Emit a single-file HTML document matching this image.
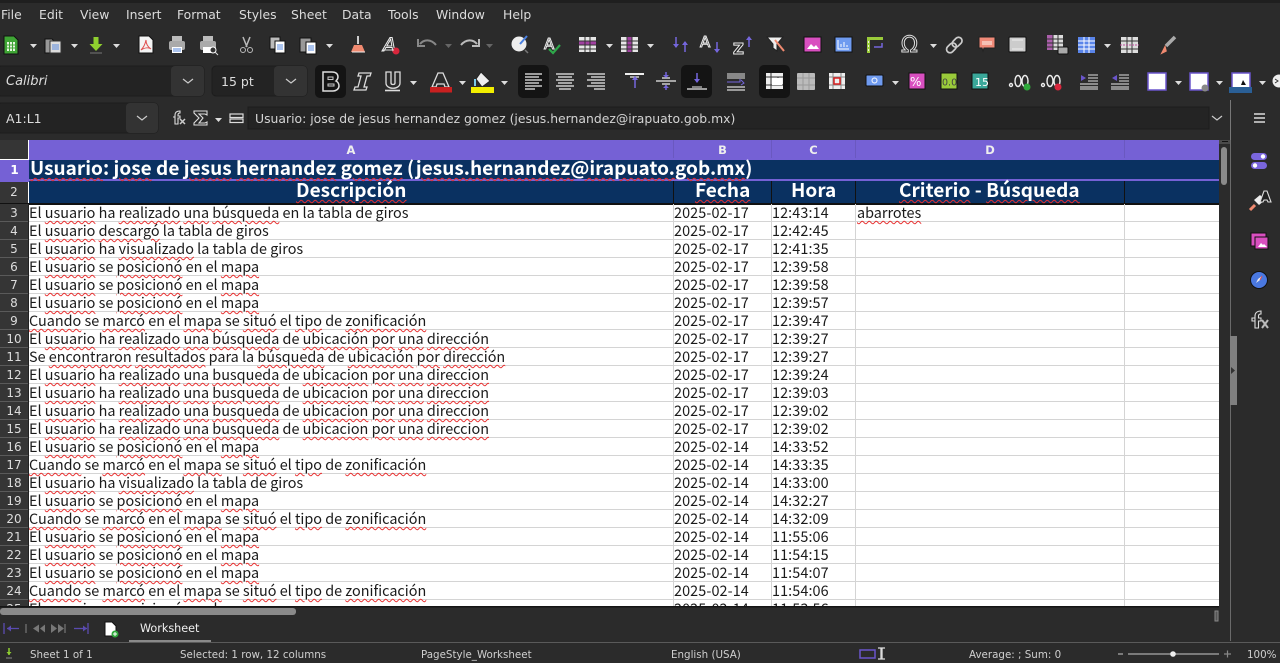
<!DOCTYPE html>
<html><head><meta charset="utf-8"><style>
html,body{margin:0;padding:0;background:#2b2b2b;width:1280px;height:663px;overflow:hidden}
#g{position:absolute;left:0;top:0;width:1280px;height:663px;overflow:hidden}
.ui{position:absolute;z-index:3;font-family:"DejaVu Sans","Liberation Sans",sans-serif;color:#d8d8d8;white-space:nowrap}
.menu{top:7px;font-size:12.4px;line-height:16px;color:#dcdcdc}
.st{top:648px;font-size:10.3px;line-height:14px;color:#cfcfcf}
#sheet{position:absolute;left:0;top:140px;width:1219px;height:466px;overflow:hidden;background:#fff}
.t{position:absolute;margin-top:1px;white-space:nowrap;font-family:"Noto Sans CJK JP","Liberation Sans",sans-serif;font-size:14.4px;line-height:18px;color:#1a1a1a}
.t[style*="left:674"],.t[style*="left:772"]{letter-spacing:.1px}
.t u{text-decoration:underline wavy #e83030 1px;text-underline-offset:1.5px}
.rn{position:absolute;left:0;width:28px;background:#353535;color:#ddd;font:12px/18px "DejaVu Sans",sans-serif;text-align:center;height:17px;border-bottom:1px solid #5a5a5a}
.hl{position:absolute;height:1px;left:29px;width:1190px;background:#d4d4d4}
.vl{position:absolute;width:1px;top:64px;height:402px;background:#d4d4d4}
.ch{position:absolute;top:0;height:18px;background:#7561d5;color:#eee;font:bold 11.5px/20px "DejaVu Sans",sans-serif;text-align:center;border-right:1px solid #6a58c0}
.b{position:absolute;color:#fff;font-family:"Noto Sans CJK JP","Liberation Sans",sans-serif;font-weight:700;white-space:nowrap;font-size:19px;line-height:24px;letter-spacing:.03px}
.b u{text-decoration:underline wavy #e83030 1px;text-underline-offset:1.5px}
</style></head><body><div id="g">

<div style="position:absolute;left:0;top:0;width:1280px;height:3px;background:#1f1f1f"></div>
<div class="ui menu" style="left:1px">File</div><div class="ui menu" style="left:39px">Edit</div><div class="ui menu" style="left:80px">View</div><div class="ui menu" style="left:126px">Insert</div><div class="ui menu" style="left:177px">Format</div><div class="ui menu" style="left:239px">Styles</div><div class="ui menu" style="left:291px">Sheet</div><div class="ui menu" style="left:342px">Data</div><div class="ui menu" style="left:388px">Tools</div><div class="ui menu" style="left:436px">Window</div><div class="ui menu" style="left:503px">Help</div>

<div class="ui" style="left:6px;top:74px;font-size:13px;line-height:16px;font-style:italic;color:#ddd">Calibri</div>
<div class="ui" style="left:221px;top:74px;font-size:12.5px;line-height:16px;color:#ddd">15 pt</div>
<div class="ui" style="left:6px;top:111px;font-size:12.5px;line-height:16px;color:#ddd">A1:L1</div>
<div class="ui" style="left:255px;top:111px;font-size:12.4px;line-height:16px;color:#d4d4d4">Usuario: jose de jesus hernandez gomez (jesus.hernandez@irapuato.gob.mx)</div>

<svg style="position:absolute;left:0;top:0" width="1280" height="140" viewBox="0 0 1280 140" fill="none">
<rect x="-3" y="66" width="207" height="30" rx="4" fill="#232323" stroke="#1c1c1c"/><rect x="171" y="66" width="33" height="30" rx="4" fill="#333"/>
<rect x="212" y="66" width="95" height="30" rx="4" fill="#232323" stroke="#1c1c1c"/><rect x="274" y="66" width="33" height="30" rx="4" fill="#333"/>
<rect x="-3" y="103" width="161" height="30" rx="4" fill="#232323" stroke="#1c1c1c"/><rect x="126" y="103" width="32" height="30" rx="4" fill="#333"/>
<rect x="248" y="107" width="961" height="22" fill="#242424" stroke="#1c1c1c"/>
<g stroke="#ccc" stroke-width="1.2"><path d="M183 79l5 4 5-4M286 79l5 4 5-4M137 116l5 4 5-4M1212 116l5 4 5-4"/></g>
<g fill="#141414"><rect x="315" y="65" width="31" height="33" rx="5"/><rect x="518" y="65" width="31" height="33" rx="5"/><rect x="681" y="65" width="31" height="33" rx="5"/><rect x="759" y="65" width="31" height="33" rx="5"/></g>
<g fill="#ddd"><path d="M30 44h7l-3.500 4zM71 44h7l-3.500 4zM113 44h7l-3.500 4zM326 44h7l-3.500 4zM606 44h7l-3.500 4zM647 44h7l-3.500 4zM930 44h7l-3.500 4zM1104 44h7l-3.500 4zM410 81h7l-3.500 4zM459 81h7l-3.500 4zM501 81h7l-3.500 4zM892 81h7l-3.500 4zM1175 81h7l-3.500 4zM1216 81h7l-3.500 4zM1259 81h7l-3.500 4zM215 118h7l-3.500 4z"/><path fill="#666" d="M445 44h7l-3.500 4zM486 44h7l-3.500 4z"/></g>
<!-- row 1 -->
<path d="M4 36h10l4 4v14H4z" fill="#3fa535" stroke="#111"/><rect x="7" y="42" width="8" height="9" fill="#e8f5e0"/><path d="M9.500 42v9M12.500 42v9M7 45h8M7 48h8" stroke="#3fa535"/>
<path d="M45 39h7l2 2h7v12H45z" fill="#999" stroke="#111"/><rect x="50" y="41" width="11" height="12" fill="#ddd" stroke="#333"/><path d="M52 45h7M52 47h7M52 49h7" stroke="#5a8be0"/>
<path d="M93.500 37h5v7h4l-6.500 7-6.500-7h4z" fill="#8fcf2f"/><path d="M90 53h12" stroke="#777"/>
<path d="M139 36h10l4 4v13h-14z" fill="#f4f4f4" stroke="#111"/><path d="M146 40c-1 5-3 8-5 10 3-2 7-3 10-1-3-2-5-5-5-9z" stroke="#e05050"/>
<path d="M172 36h10v5h-10z" fill="#bbb"/><rect x="169" y="41" width="16" height="9" rx="2" fill="#aaa"/><rect x="172" y="47" width="10" height="6" fill="#fff"/><path d="M173 49h8M173 51h8" stroke="#5a8be0"/>
<path d="M203 36h10v5h-10z" fill="#bbb"/><rect x="200" y="41" width="16" height="9" rx="2" fill="#aaa"/><rect x="203" y="47" width="8" height="6" fill="#fff"/><circle cx="213" cy="50" r="3" fill="#333" stroke="#fff"/><path d="M215 52l3 3" stroke="#ddd"/>
<path d="M243 37l4 10M250 37l-4 10" stroke="#bbb" stroke-width="1.500"/><circle cx="243" cy="50" r="2.500" stroke="#bbb"/><circle cx="250" cy="50" r="2.500" stroke="#bbb"/>
<rect x="270" y="37" width="10" height="12" fill="#bbb" stroke="#111"/><rect x="275" y="41" width="10" height="12" fill="#fff" stroke="#111"/><path d="M277 45h6M277 47h6M277 49h6" stroke="#5a8be0"/>
<rect x="300" y="38" width="11" height="14" fill="#999" stroke="#111"/><rect x="306" y="42" width="10" height="12" fill="#fff" stroke="#111"/><path d="M308 46h6M308 48h6M308 50h6" stroke="#5a8be0"/>
<path d="M358 36v8" stroke="#ccc" stroke-width="2"/><path d="M354 45h8l3 7h-14z" fill="#f08a70"/><path d="M352 52h13" stroke="#eee"/>
<text x="383" y="51" font-family="DejaVu Sans" font-size="19" font-style="italic" stroke="#eee" stroke-width="1" fill="#222">A</text><circle cx="396" cy="51" r="3.500" fill="#d8263c"/><path d="M382 50h12" stroke="#ddd"/>
<path d="M420 44c4-5 11-5 16 1" stroke="#888" stroke-width="2"/><path d="M418 39v7h7" stroke="#888" stroke-width="2"/>
<path d="M477 44c-4-5-11-5-16 1" stroke="#bbb" stroke-width="2"/><path d="M479 39v7h-7" stroke="#bbb" stroke-width="2"/>
<circle cx="519" cy="44" r="7.500" fill="#eee"/><path d="M520 44l7-8" stroke="#4a80e0" stroke-width="2"/><path d="M525 50l3 3" stroke="#777" stroke-width="1.500"/>
<text x="544" y="49" font-family="DejaVu Sans" font-size="15" stroke="#eee" stroke-width="1" fill="#222">A</text><path d="M549 49l4 4 7-8" stroke="#2ea84a" stroke-width="2.200"/>
<rect x="579" y="37" width="17" height="15" fill="#e6e6e6"/><rect x="579" y="41" width="17" height="4" fill="#a040a0"/><path d="M579 41h17M579 45h17M579 49h17M585 37v15M590 37v15" stroke="#333"/>
<rect x="621" y="37" width="17" height="15" fill="#e6e6e6"/><rect x="627" y="37" width="5" height="15" fill="#a040a0"/><path d="M621 41h17M621 45h17M621 49h17M627 37v15M632 37v15" stroke="#333"/>
<path d="M676 37v10M685 52v-10" stroke="#7566dd" stroke-width="1.500"/><path d="M673 44l3 4 3-4zM682 45l3-4 3 4z" fill="#7566dd"/>
<text x="700" y="47" font-family="DejaVu Sans" font-size="15" stroke="#eee" stroke-width="1" fill="#222">A</text><path d="M717 42v10" stroke="#7566dd" stroke-width="1.500"/><path d="M714 49l3 4 3-4z" fill="#7566dd"/>
<text x="733" y="54" font-family="DejaVu Sans" font-size="15" font-weight="bold" stroke="#eee" stroke-width="1" fill="#222">Z</text><path d="M749 38v9" stroke="#7566dd" stroke-width="1.500"/><path d="M746 40l3-4 3 4z" fill="#7566dd"/>
<path d="M767 37h16l-6 7v7l-4-3v-4z" fill="#eee" stroke="#222"/><path d="M775 40l9 11" stroke="#f08a70" stroke-width="2"/>
<rect x="804" y="37" width="17" height="15" fill="#d94fc0" stroke="#111"/><path d="M807 49l4-5 3 3 2-2 3 4z" fill="#fff"/>
<rect x="835" y="37" width="17" height="15" fill="#6f9bf0" stroke="#111"/><path d="M838 40v9h11M841 47v-3M844 47v-5M847 47v-2" stroke="#fff"/>
<path d="M867 37h16v3h-16zM867 37h3v16h-3z" fill="#9acb3a"/><path d="M868.500 41v12" stroke="#eee" stroke-dasharray="2 2"/><path d="M882 43v4h-8" stroke="#7566dd" stroke-width="1.500"/>
<text x="901" y="52" font-family="DejaVu Sans" font-size="22" stroke="#ddd" stroke-width="1" fill="#222">Ω</text>
<g stroke="#ccc" stroke-width="1.700" transform="rotate(-45 955 45)"><rect x="945" y="41" width="11" height="7" rx="3.500"/><rect x="953" y="41" width="11" height="7" rx="3.500"/></g>
<path d="M979 37h16v11h-11l-1 3-1-3h-3z" fill="#f08a78" stroke="#222"/><path d="M982 41h10v4h-10z" fill="#f6c0b4"/>
<rect x="1009" y="37" width="17" height="15" rx="1" fill="#ccc" stroke="#111"/><path d="M1012 40h11M1012 49h11" stroke="#eee"/>
<rect x="1047" y="35" width="16" height="15" fill="#ddd"/><rect x="1047" y="35" width="6" height="15" fill="#a040a0" opacity=".8"/><path d="M1047 39h16M1047 43h16M1047 47h16M1053 35v15M1058 35v15" stroke="#333"/><rect x="1058" y="47" width="10" height="7" rx="1" fill="#aaa" stroke="#111"/>
<rect x="1078" y="37" width="17" height="16" fill="#5a85ea"/><path d="M1078 41h17M1078 45h17M1078 49h17M1084 37v16M1089 37v16" stroke="#fff"/>
<rect x="1121" y="37" width="17" height="16" fill="#ddd"/><path d="M1121 41h17M1121 49h17M1127 37v16M1132 37v16" stroke="#333"/><path d="M1120 45h19" stroke="#c050a0" stroke-dasharray="2 1"/>
<path d="M1175 37l-9 9" stroke="#aaa" stroke-width="3.500"/><path d="M1165 47l-3 6 4-2z" fill="#f08a70" stroke="#f08a70" stroke-width="1.500"/>
<!-- row 2 -->
<path d="M323 72h9c4 0 6 2 6 5 0 2-1 3-2 4 2 1 3 3 3 5 0 3-3 5-6 5h-10z" stroke="#ddd" stroke-width="1.500"/><rect x="328" y="77" width="5" height="2.500" stroke="#ccc"/><path d="M328 84h6v2h-6z" stroke="#ccc"/>
<path d="M359 73h12l-1 3h-3l-3 11h3l-1 3h-12l1-3h3l3-11h-3z" stroke="#ddd" stroke-width="1.300"/>
<path d="M386 72h5v11c0 2 4 2 4 0V72h5v11c0 7-14 7-14 0z" stroke="#ddd" stroke-width="1.300"/><path d="M385 90.500h15" stroke="#ddd" stroke-width="1.600"/>
<path d="M438 73h5l6 14h-4l-1-3h-7l-1 3h-4z" stroke="#ddd" stroke-width="1.300"/><rect x="430" y="87" width="22" height="5.500" fill="#c92020"/>
<path d="M481 72l9 9-8 6-6-8z" fill="#eee" stroke="#222"/><path d="M475 79v7" stroke="#7cc8e8" stroke-width="2"/><rect x="471" y="87" width="23" height="6" fill="#f2ee00"/>
<g stroke="#eee" stroke-width="1.300">
<path d="M525 74h17M525 77h14M525 80h17M525 83h14M525 86h17M525 89h10"/>
<path d="M556 74h18M558 77h14M556 80h18M558 83h14M556 86h18M559 89h12"/>
<path d="M587 74h18M591 77h14M587 80h18M591 83h14M587 86h18M594 89h11"/>
<path d="M625 74h19" stroke-width="2"/><path d="M630 77h9M656 81h20"/><path d="M662 84h8M662 78h8M687 89h20"/>
<path d="M692 87h10" stroke="#bbb"/>
</g>
<path d="M635 88v-9M666 72v5M666 90v-5M697 73v8" stroke="#7566dd" stroke-width="1.500"/><path d="M632 80l3-4 3 4zM663 75l3 3 3-3zM663 88l3-3 3 3zM694 79l3 4 3-4z" fill="#7566dd"/>
<rect x="727" y="73" width="18" height="6" fill="#888"/><path d="M727 87h18M727 90h18" stroke="#ddd" stroke-width="1.300"/><path d="M727 82h13v-3M741 80l3 3-3 2" stroke="#7566dd"/>
<rect x="766" y="73" width="17" height="16" fill="#eee"/><path d="M766 77h17M766 85h17M771 73v16M778 77v8" stroke="#333"/><rect x="772" y="78" width="10" height="7" fill="#fff"/>
<rect x="797" y="73" width="18" height="17" fill="#bbb" rx="1"/><path d="M797 78h18M797 85h18M803 73v17M809 73v17" stroke="#999"/>
<rect x="829" y="73" width="16" height="16" fill="#eee"/><path d="M829 77h16M829 85h16M833 73v16M841 73v16" stroke="#888"/><rect x="834" y="78" width="6" height="6" fill="none" stroke="#d82020" stroke-width="1.500"/>
<rect x="866" y="75" width="17" height="11" rx="1" fill="#6f9bf0" stroke="#111"/><circle cx="874.500" cy="80.500" r="2.500" stroke="#fff"/>
<rect x="909" y="73" width="16" height="16" fill="#d94fc0" stroke="#111"/><text x="910" y="86" font-family="DejaVu Sans" font-size="12" fill="#fff">%</text>
<rect x="941" y="73" width="16" height="16" fill="#9acb3a" stroke="#111"/><text x="942" y="85.500" font-family="DejaVu Sans" font-size="9.500" fill="#444">0.0</text>
<rect x="972" y="73" width="16" height="16" fill="#3aa89a" stroke="#111"/><text x="975" y="86" font-family="DejaVu Sans" font-size="11" fill="#fff">15</text>
<g stroke="#eee" stroke-width="1.400"><circle cx="1011" cy="85" r="1.500"/><ellipse cx="1018" cy="81" rx="3" ry="5.500"/><ellipse cx="1025" cy="81" rx="3" ry="5.500"/><circle cx="1043" cy="85" r="1.500"/><ellipse cx="1050" cy="81" rx="3" ry="5.500"/><ellipse cx="1057" cy="81" rx="3" ry="5.500"/></g>
<circle cx="1027" cy="87" r="3.500" fill="#2ea83a"/><circle cx="1058" cy="87" r="3.500" fill="#d8263c"/>
<path d="M1081 75l5 3-5 3z" fill="#6a55cc"/><path d="M1088 75h10M1088 78h10M1088 81h10" stroke="#bbb" stroke-width="1.300"/><path d="M1080 84h18M1080 87h18M1080 89h18" stroke="#eee"/>
<path d="M1117 75l-5 3 5 3z" fill="#6a55cc"/><path d="M1119 75h10M1119 78h10M1119 81h10" stroke="#bbb" stroke-width="1.300"/><path d="M1111 84h18M1111 87h18M1111 89h18" stroke="#eee"/>
<rect x="1148" y="73" width="18" height="17" fill="#fff" stroke="#6a55cc" stroke-width="1.500"/>
<rect x="1190" y="73" width="18" height="17" fill="#fff" stroke="#6a55cc" stroke-width="1.500"/><circle cx="1205" cy="88" r="3.500" fill="#888"/>
<rect x="1232" y="73" width="18" height="15" fill="#fff" stroke="#6a55cc" stroke-width="1.500"/><rect x="1229" y="87" width="23" height="6" fill="#2a5f96"/><path d="M1243 80l3 5h-5z" fill="#111"/>
<circle cx="1279" cy="81" r="6.500" fill="#eee"/><path d="M1275 79l3 2-3 2" stroke="#333"/>
<!-- formula bar -->
<path d="M175 124v-9c0-3 2-4 5-4v2c-1 0-2 0-2 2v1h2v2h-2v6zM173 117h2" stroke="#ddd" stroke-width="1.100"/><path d="M180 119l5 5M185 119l-5 5" stroke="#ccc" stroke-width="1.500"/>
<path d="M194 111h13v4l-2-1h-6l4 4-4 5h6l2-1v3h-13v-2l5-5-5-5z" stroke="#ddd" stroke-width="1.100"/>
<rect x="230" y="114" width="13" height="3.500" stroke="#ddd" stroke-width="1.200"/><rect x="230" y="119" width="13" height="3.500" stroke="#ddd" stroke-width="1.200"/>
<path d="M1254 114h11M1254 118h11M1254 122h11" stroke="#ddd" stroke-width="1.500"/>
<path d="M1230.500 100v40" stroke="#777"/>
</svg>

<div id="sheet">
<div class="ch" style="left:0;width:28px;background:#353535;border:0;height:19px"></div>
<div class="ch" style="left:29px;width:644px">A</div><div class="ch" style="left:674px;width:97px">B</div><div class="ch" style="left:772px;width:83px">C</div><div class="ch" style="left:856px;width:268px">D</div><div class="ch" style="left:1125px;width:94px"></div>
<div style="position:absolute;left:29px;top:18px;width:1190px;height:2px;background:#7561d5"></div>
<div style="position:absolute;left:0;top:20px;width:29px;height:22px;background:#7561d5;color:#fff;font:bold 12px/20px 'DejaVu Sans',sans-serif;text-align:center">1</div>
<div style="position:absolute;left:29px;top:20px;width:1190px;height:19px;background:#0a3161"></div>
<div style="position:absolute;left:29px;top:39px;width:1190px;height:2px;background:#7561d5"></div>
<div style="position:absolute;left:29px;top:41px;width:1190px;height:22px;background:#0a3161"></div>
<div style="position:absolute;left:0;top:42px;width:28px;height:21px;background:#353535;color:#ddd;font:12px/20px 'DejaVu Sans',sans-serif;text-align:center">2</div>
<div style="position:absolute;left:0;top:63px;width:1219px;height:1.500px;background:#111"></div>
<div style="position:absolute;left:673px;top:41px;width:1px;height:22px;background:#111"></div><div style="position:absolute;left:771px;top:41px;width:1px;height:22px;background:#111"></div><div style="position:absolute;left:855px;top:41px;width:1px;height:22px;background:#111"></div><div style="position:absolute;left:1124px;top:41px;width:1px;height:22px;background:#111"></div>
<div class="b" style="left:30px;top:16px"><u>Usuario</u>: <u>jose</u> de <u>jesus</u> <u>hernandez</u> <u>gomez</u> (<u>jesus.hernandez@irapuato.gob.mx</u>)</div>
<div class="b" style="left:296px;top:38px"><u>Descripción</u></div>
<div class="b" style="left:695px;top:38px"><u>Fecha</u></div>
<div class="b" style="left:791px;top:38px">Hora</div>
<div class="b" style="left:899px;top:38px"><u>Criterio</u> - <u>Búsqueda</u></div>

<div class="vl" style="left:28px;background:#222"></div><div class="vl" style="left:673px"></div><div class="vl" style="left:771px"></div><div class="vl" style="left:855px"></div><div class="vl" style="left:1124px"></div>
<div class="hl" style="top:81px"></div><div class="hl" style="top:99px"></div><div class="hl" style="top:117px"></div><div class="hl" style="top:135px"></div><div class="hl" style="top:153px"></div><div class="hl" style="top:171px"></div><div class="hl" style="top:189px"></div><div class="hl" style="top:207px"></div><div class="hl" style="top:225px"></div><div class="hl" style="top:243px"></div><div class="hl" style="top:261px"></div><div class="hl" style="top:279px"></div><div class="hl" style="top:297px"></div><div class="hl" style="top:315px"></div><div class="hl" style="top:333px"></div><div class="hl" style="top:351px"></div><div class="hl" style="top:369px"></div><div class="hl" style="top:387px"></div><div class="hl" style="top:405px"></div><div class="hl" style="top:423px"></div><div class="hl" style="top:441px"></div><div class="hl" style="top:459px"></div>

<div class="rn" style="top:64px">3</div><div class="rn" style="top:82px">4</div><div class="rn" style="top:100px">5</div><div class="rn" style="top:118px">6</div><div class="rn" style="top:136px">7</div><div class="rn" style="top:154px">8</div><div class="rn" style="top:172px">9</div><div class="rn" style="top:190px">10</div><div class="rn" style="top:208px">11</div><div class="rn" style="top:226px">12</div><div class="rn" style="top:244px">13</div><div class="rn" style="top:262px">14</div><div class="rn" style="top:280px">15</div><div class="rn" style="top:298px">16</div><div class="rn" style="top:316px">17</div><div class="rn" style="top:334px">18</div><div class="rn" style="top:352px">19</div><div class="rn" style="top:370px">20</div><div class="rn" style="top:388px">21</div><div class="rn" style="top:406px">22</div><div class="rn" style="top:424px">23</div><div class="rn" style="top:442px">24</div><div class="rn" style="top:460px">25</div>

<div class="t" style="left:29px;top:63px">El <u>usuario</u> ha <u>realizado</u> <u>una</u> <u>búsqueda</u> en la tabla de giros</div>
<div class="t" style="left:29px;top:81px">El <u>usuario</u> <u>descargó</u> la tabla de giros</div>
<div class="t" style="left:29px;top:99px">El <u>usuario</u> ha <u>visualizado</u> la tabla de giros</div>
<div class="t" style="left:29px;top:117px">El <u>usuario</u> se <u>posicionó</u> en el <u>mapa</u></div>
<div class="t" style="left:29px;top:135px">El <u>usuario</u> se <u>posicionó</u> en el <u>mapa</u></div>
<div class="t" style="left:29px;top:153px">El <u>usuario</u> se <u>posicionó</u> en el <u>mapa</u></div>
<div class="t" style="left:29px;top:171px"><u>Cuando</u> se <u>marcó</u> en el <u>mapa</u> se <u>situó</u> el <u>tipo</u> de <u>zonificación</u></div>
<div class="t" style="left:29px;top:189px">El <u>usuario</u> ha <u>realizado</u> <u>una</u> <u>búsqueda</u> de <u>ubicación</u> <u>por</u> <u>una</u> <u>dirección</u></div>
<div class="t" style="left:29px;top:207px">Se <u>encontraron</u> <u>resultados</u> para la <u>búsqueda</u> de <u>ubicación</u> <u>por</u> <u>dirección</u></div>
<div class="t" style="left:29px;top:225px">El <u>usuario</u> ha <u>realizado</u> <u>una</u> <u>busqueda</u> de <u>ubicacion</u> <u>por</u> <u>una</u> <u>direccion</u></div>
<div class="t" style="left:29px;top:243px">El <u>usuario</u> ha <u>realizado</u> <u>una</u> <u>busqueda</u> de <u>ubicacion</u> <u>por</u> <u>una</u> <u>direccion</u></div>
<div class="t" style="left:29px;top:261px">El <u>usuario</u> ha <u>realizado</u> <u>una</u> <u>busqueda</u> de <u>ubicacion</u> <u>por</u> <u>una</u> <u>direccion</u></div>
<div class="t" style="left:29px;top:279px">El <u>usuario</u> ha <u>realizado</u> <u>una</u> <u>busqueda</u> de <u>ubicacion</u> <u>por</u> <u>una</u> <u>direccion</u></div>
<div class="t" style="left:29px;top:297px">El <u>usuario</u> se <u>posicionó</u> en el <u>mapa</u></div>
<div class="t" style="left:29px;top:315px"><u>Cuando</u> se <u>marcó</u> en el <u>mapa</u> se <u>situó</u> el <u>tipo</u> de <u>zonificación</u></div>
<div class="t" style="left:29px;top:333px">El <u>usuario</u> ha <u>visualizado</u> la tabla de giros</div>
<div class="t" style="left:29px;top:351px">El <u>usuario</u> se <u>posicionó</u> en el <u>mapa</u></div>
<div class="t" style="left:29px;top:369px"><u>Cuando</u> se <u>marcó</u> en el <u>mapa</u> se <u>situó</u> el <u>tipo</u> de <u>zonificación</u></div>
<div class="t" style="left:29px;top:387px">El <u>usuario</u> se <u>posicionó</u> en el <u>mapa</u></div>
<div class="t" style="left:29px;top:405px">El <u>usuario</u> se <u>posicionó</u> en el <u>mapa</u></div>
<div class="t" style="left:29px;top:423px">El <u>usuario</u> se <u>posicionó</u> en el <u>mapa</u></div>
<div class="t" style="left:29px;top:441px"><u>Cuando</u> se <u>marcó</u> en el <u>mapa</u> se <u>situó</u> el <u>tipo</u> de <u>zonificación</u></div>
<div class="t" style="left:29px;top:459px">El <u>usuario</u> se <u>posicionó</u> en el <u>mapa</u></div>

<div class="t" style="left:674px;top:63px">2025-02-17</div><div class="t" style="left:772px;top:63px">12:43:14</div><div class="t" style="left:857px;top:63px"><u>abarrotes</u></div>
<div class="t" style="left:674px;top:81px">2025-02-17</div><div class="t" style="left:772px;top:81px">12:42:45</div>
<div class="t" style="left:674px;top:99px">2025-02-17</div><div class="t" style="left:772px;top:99px">12:41:35</div>
<div class="t" style="left:674px;top:117px">2025-02-17</div><div class="t" style="left:772px;top:117px">12:39:58</div>
<div class="t" style="left:674px;top:135px">2025-02-17</div><div class="t" style="left:772px;top:135px">12:39:58</div>
<div class="t" style="left:674px;top:153px">2025-02-17</div><div class="t" style="left:772px;top:153px">12:39:57</div>
<div class="t" style="left:674px;top:171px">2025-02-17</div><div class="t" style="left:772px;top:171px">12:39:47</div>
<div class="t" style="left:674px;top:189px">2025-02-17</div><div class="t" style="left:772px;top:189px">12:39:27</div>
<div class="t" style="left:674px;top:207px">2025-02-17</div><div class="t" style="left:772px;top:207px">12:39:27</div>
<div class="t" style="left:674px;top:225px">2025-02-17</div><div class="t" style="left:772px;top:225px">12:39:24</div>
<div class="t" style="left:674px;top:243px">2025-02-17</div><div class="t" style="left:772px;top:243px">12:39:03</div>
<div class="t" style="left:674px;top:261px">2025-02-17</div><div class="t" style="left:772px;top:261px">12:39:02</div>
<div class="t" style="left:674px;top:279px">2025-02-17</div><div class="t" style="left:772px;top:279px">12:39:02</div>
<div class="t" style="left:674px;top:297px">2025-02-14</div><div class="t" style="left:772px;top:297px">14:33:52</div>
<div class="t" style="left:674px;top:315px">2025-02-14</div><div class="t" style="left:772px;top:315px">14:33:35</div>
<div class="t" style="left:674px;top:333px">2025-02-14</div><div class="t" style="left:772px;top:333px">14:33:00</div>
<div class="t" style="left:674px;top:351px">2025-02-14</div><div class="t" style="left:772px;top:351px">14:32:27</div>
<div class="t" style="left:674px;top:369px">2025-02-14</div><div class="t" style="left:772px;top:369px">14:32:09</div>
<div class="t" style="left:674px;top:387px">2025-02-14</div><div class="t" style="left:772px;top:387px">11:55:06</div>
<div class="t" style="left:674px;top:405px">2025-02-14</div><div class="t" style="left:772px;top:405px">11:54:15</div>
<div class="t" style="left:674px;top:423px">2025-02-14</div><div class="t" style="left:772px;top:423px">11:54:07</div>
<div class="t" style="left:674px;top:441px">2025-02-14</div><div class="t" style="left:772px;top:441px">11:54:06</div>
<div class="t" style="left:674px;top:459px">2025-02-14</div><div class="t" style="left:772px;top:459px">11:53:56</div>
</div>

<svg style="position:absolute;left:0;top:0" width="1280" height="663" viewBox="0 0 1280 663" fill="none">
<rect x="0" y="606" width="1219" height="1.500" fill="#151515"/>
<rect x="0" y="608" width="296" height="7" rx="3" fill="#8a8a8a"/>
<rect x="1219" y="140" width="11" height="4" fill="#4a4a4a"/><path d="M1222 141.500h6" stroke="#111"/>
<rect x="1221" y="147" width="6" height="38" rx="3" fill="#8a8a8a"/>
<rect x="1215" y="611" width="3" height="10" fill="#555" stroke="#888"/>
<path d="M1230.500 140V641" stroke="#6a6a6a"/>
<rect x="1230" y="336" width="7" height="69" fill="#808080"/><path d="M1231 367l4 3.500-4 3.500z" fill="#333"/>
<!-- side icons -->
<rect x="1251" y="153" width="16" height="7" rx="3.500" fill="#7a66dd"/><circle cx="1263" cy="156.500" r="2.200" fill="#fff"/>
<rect x="1251" y="162" width="16" height="7" rx="3.500" fill="#7a66dd"/><circle cx="1255" cy="165.500" r="2.200" fill="#fff"/>
<path d="M1250 210l5-5" stroke="#f08a70" stroke-width="3"/><path d="M1254 200l6-5 5 5-6 5z" fill="#eee"/>
<path d="M1264 191h3l4 11h-3l-1-2h-3l-1 2h-3z" stroke="#ddd" stroke-width="1.100" fill="#222"/>
<rect x="1251" y="233" width="15" height="13" fill="#d94fc0" stroke="#111"/><rect x="1255" y="237" width="13" height="12" fill="#d94fc0" stroke="#111"/><path d="M1258 247l3-4 2 2 1-1 3 3z" fill="#fff"/>
<circle cx="1259" cy="280" r="8.500" fill="#4a78e0" stroke="#111"/><path d="M1256 283l2-4 4-3-2 4z" fill="#eee"/><path d="M1260 280l2-4" stroke="#e05050"/>
<path d="M1255 328v-12c0-3 2-5 6-5v3c-2 0-2.500 1-2.500 2v2h2.500v3h-2.500v7zM1252 318h3v3h-3z" stroke="#ddd" stroke-width="1.100"/>
<path d="M1262 320l6 8M1268 320l-6 8" stroke="#bbb" stroke-width="2"/>
<!-- tab bar -->
<path d="M4 623v11M19 628.500H7" stroke="#5a4bb0" stroke-width="1.300"/><path d="M7 628.500l4-3v6z" fill="#5a4bb0"/>
<path d="M26 624v9" stroke="#777" stroke-width="1.200"/><path d="M33 628.500l6-4v8zM40 628.500l5-4v8z" fill="#777"/>
<path d="M51 624l6 4.500-6 4.500zM58 624l6 4.500-6 4.500z" fill="#777"/><path d="M65 624v9" stroke="#777" stroke-width="1.200"/>
<path d="M74 628.500h13" stroke="#5a4bb0" stroke-width="1.300"/><path d="M87 628.500l-4-3v6z" fill="#5a4bb0"/><path d="M88 623v11" stroke="#5a4bb0" stroke-width="1.300"/>
<path d="M105 622h7l4 4v10h-11z" fill="#fff" stroke="#111"/><circle cx="115" cy="634" r="3.500" fill="#2ea83a"/><path d="M113 634h4M115 632v4" stroke="#fff"/>
<rect x="129" y="640" width="82" height="2" fill="#8a8a8a"/>
<rect x="0" y="642" width="1280" height="1" fill="#5a5a5a"/>
<rect x="860" y="650" width="15" height="8" stroke="#6a55cc" stroke-width="1.500"/>
<path d="M878 648h3v11h-3M885 648h-3v11h3" stroke="#ddd" stroke-width="1.300"/>
<path d="M1118 654h5M1128 654h91" stroke="#aaa" stroke-width="1.200"/><circle cx="1173" cy="654" r="2.800" fill="#eee"/>
<path d="M1224 654h7M1227.500 650.500v7" stroke="#888" stroke-width="1.200"/>
<path d="M9 648v7" stroke="#8fcf2f" stroke-width="1.500"/><path d="M6.500 652l2.500 3 2.500-3z" fill="#8fcf2f"/><path d="M6 658h6" stroke="#888"/>
</svg>

<div class="ui" style="left:140px;top:621px;font-size:11.2px;line-height:16px;font-weight:normal;color:#f0f0f0">Worksheet</div>
<div class="ui st" style="left:30px">Sheet 1 of 1</div>
<div class="ui st" style="left:180px">Selected: 1 row, 12 columns</div>
<div class="ui st" style="left:421px">PageStyle_Worksheet</div>
<div class="ui st" style="left:671px">English (USA)</div>
<div class="ui st" style="left:969px">Average: ; Sum: 0</div>
<div class="ui st" style="left:1247px">100%</div>
</div></body></html>
